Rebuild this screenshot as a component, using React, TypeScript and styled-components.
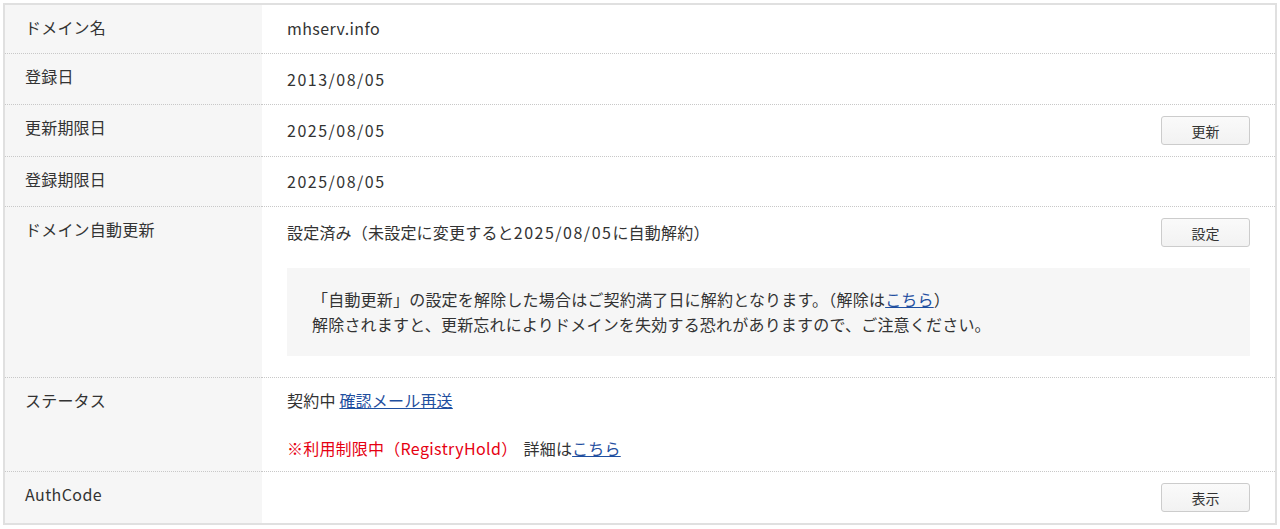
import styled, { createGlobalStyle } from "styled-components";

const GlobalStyle = createGlobalStyle`
  body {
    margin: 3px;
    background: #fff;
    color: #333;
    font-family: "Noto Sans CJK JP", sans-serif;
    font-size: 16px;
    letter-spacing: 0.2px;
  }
`;

const Table = styled.div`
  width: 1270px;
  border: 2px solid #e0e0e0;
  display: grid;
  grid-template-columns: 257px 1fr;
`;

const Row = styled.div`
  display: contents;

  &:not(:last-child) > * {
    border-bottom: 1px dotted #c8c8c8;
  }
`;

const Label = styled.div`
  background: #f6f6f6;
  padding: 10px 20px 0;
  line-height: 24px;
`;

const Value = styled.div<{ $pad?: string }>`
  padding: ${(p) => p.$pad ?? "12px 25px"};
  line-height: 25px;
  display: flex;
  flex-direction: column;
`;

const Line = styled.div`
  display: flex;
  align-items: center;
  justify-content: space-between;
  min-height: 25px;
`;

// latin runs are a bit wider in the original font
const Latin = styled.span<{ $num?: boolean }>`
  letter-spacing: ${(p) => (p.$num ? "1.5px" : "0.4px")};
`;

const Button = styled.button`
  width: 89px;
  height: 29px;
  border: 1px solid #cccccc;
  border-radius: 3px;
  background: linear-gradient(#fafafa, #f2f2f2);
  color: #333;
  font-family: inherit;
  font-size: 14px;
  cursor: pointer;
`;

const Notice = styled.div`
  margin-top: 21px;
  background: #f6f6f6;
  padding: 19px 25px;
  line-height: 25px;
`;

const Link = styled.a`
  color: #1f4fa0;
  text-decoration: underline;
  cursor: pointer;
`;

const StatusLine = styled.div`
  line-height: 26px;
  & + & {
    margin-top: 22px;
  }
`;

const Red = styled.span`
  color: #e60012;
  margin-right: 6px;
`;

export default function App() {
  return (
    <>
      <GlobalStyle />
      <Table>
        <Row>
          <Label>ドメイン名</Label>
          <Value $pad="11px 25px 12px">
            <Line>
              <Latin>mhserv.info</Latin>
            </Line>
          </Value>
        </Row>
        <Row>
          <Label>登録日</Label>
          <Value $pad="13px 25px 12px">
            <Line>
              <Latin $num>2013/08/05</Latin>
            </Line>
          </Value>
        </Row>
        <Row>
          <Label>更新期限日</Label>
          <Value $pad="11px 25px">
            <Line>
              <Latin $num>2025/08/05</Latin>
              <Button>更新</Button>
            </Line>
          </Value>
        </Row>
        <Row>
          <Label>登録期限日</Label>
          <Value $pad="12px 25px">
            <Line>
              <Latin $num>2025/08/05</Latin>
            </Line>
          </Value>
        </Row>
        <Row>
          <Label>ドメイン自動更新</Label>
          <Value $pad="11px 25px 21px">
            <Line>
              <span>
                設定済み（未設定に変更すると<Latin $num>2025/08/05</Latin>に自動解約）
              </span>
              <Button>設定</Button>
            </Line>
            <Notice>
              「自動更新」の設定を解除した場合はご契約満了日に解約となります。（解除は
              <Link>こちら</Link>）
              <br />
              解除されますと、更新忘れによりドメインを失効する恐れがありますので、ご注意ください。
            </Notice>
          </Value>
        </Row>
        <Row>
          <Label>ステータス</Label>
          <Value $pad="9px 25px 10px">
            <StatusLine>
              契約中 <Link>確認メール再送</Link>
            </StatusLine>
            <StatusLine>
              <Red>
                ※利用制限中（<Latin>RegistryHold</Latin>）
              </Red>
              詳細は<Link>こちら</Link>
            </StatusLine>
          </Value>
        </Row>
        <Row>
          <Label>
            <Latin>AuthCode</Latin>
          </Label>
          <Value $pad="11px 25px">
            <Line>
              <span />
              <Button>表示</Button>
            </Line>
          </Value>
        </Row>
      </Table>
    </>
  );
}
